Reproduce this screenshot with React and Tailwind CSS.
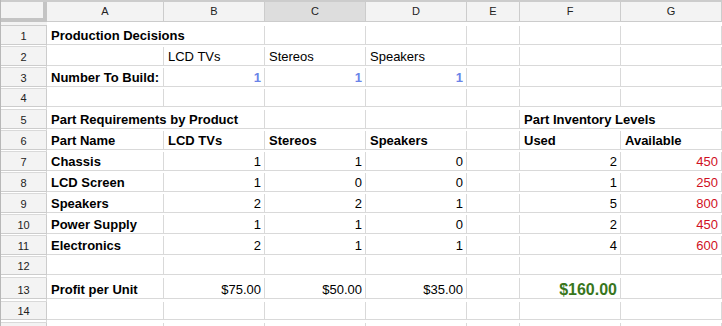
import React from "react";

const COLS = "grid grid-cols-[46px_117px_101px_101px_101px_53px_101px_101px]";

function Cell({ children, span = 1, align = "left", bold = false, color = "text-black", extra = "" }) {
  const spanCls = span === 2 ? "col-span-2" : "";
  const alignCls = align === "right" ? "justify-end pr-[3px]" : "justify-start pl-[4px]";
  return (
    <div
      className={`${spanCls} flex items-end ${alignCls} border-r border-b border-[#d9d9d9] overflow-visible whitespace-nowrap text-[13px] leading-[17px] ${bold ? "font-bold" : "font-normal"} ${color} ${extra}`}
    >
      {children}
    </div>
  );
}

function RowHead({ n }) {
  return (
    <div className="flex items-end justify-center bg-[#f3f3f3] border-r border-b border-[#cccccc] text-[11px] leading-[15px] text-[#222222]">
      {n}
    </div>
  );
}

function Row({ n, h = "h-[21px]", children }) {
  return (
    <div className={`${COLS} ${h}`}>
      <RowHead n={n} />
      {children}
    </div>
  );
}

function EmptyCells() {
  return (
    <>
      <Cell />
      <Cell />
      <Cell />
      <Cell />
      <Cell />
      <Cell />
      <Cell />
      <Cell />
    </>
  );
}

const parts = [
  ["Chassis", "1", "1", "0", "2", "450"],
  ["LCD Screen", "1", "0", "0", "1", "250"],
  ["Speakers", "2", "2", "1", "5", "800"],
  ["Power Supply", "1", "1", "0", "2", "450"],
  ["Electronics", "2", "1", "1", "4", "600"],
];

export default function App() {
  const blue = "text-[#6b84e8]";
  const red = "text-[#d0101e]";
  return (
    <div
      className="w-[722px] h-[326px] overflow-hidden bg-white border-l border-[#b8b8b8]"
      style={{ fontFamily: '"Liberation Sans", Arial, sans-serif' }}
    >
      {/* Column headers */}
      <div className={`${COLS} h-[26px] border-t-2 border-[#cccccc]`}>
        <div className="bg-[#f3f3f3] border-r-4 border-b-4 border-[#c4c4c4]" />
        {["A", "B", "C", "D", "E", "F", "G"].map((l) => (
          <div
            key={l}
            className={`flex items-center justify-center border-r border-b border-[#cccccc] text-[11px] text-[#222222] ${l === "C" ? "bg-[#dddddd]" : "bg-[#f3f3f3]"}`}
          >
            {l}
          </div>
        ))}
        <div className="bg-[#f3f3f3] border-b border-[#cccccc]" />
      </div>

      <Row n={1}>
        <Cell span={2} bold>Production Decisions</Cell>
        <Cell />
        <Cell />
        <Cell />
        <Cell />
        <Cell />
        <Cell />
      </Row>
      <Row n={2}>
        <Cell />
        <Cell>LCD TVs</Cell>
        <Cell>Stereos</Cell>
        <Cell>Speakers</Cell>
        <Cell />
        <Cell />
        <Cell />
        <Cell />
      </Row>
      <Row n={3}>
        <Cell bold>Number To Build:</Cell>
        <Cell align="right" bold color={blue}>1</Cell>
        <Cell align="right" bold color={blue}>1</Cell>
        <Cell align="right" bold color={blue}>1</Cell>
        <Cell />
        <Cell />
        <Cell />
        <Cell />
      </Row>
      <Row n={4}>
        <EmptyCells />
      </Row>
      <Row n={5}>
        <Cell span={2} bold>Part Requirements by Product</Cell>
        <Cell />
        <Cell />
        <Cell />
        <Cell span={2} bold>Part Inventory Levels</Cell>
        <Cell />
      </Row>
      <Row n={6}>
        <Cell bold>Part Name</Cell>
        <Cell bold>LCD TVs</Cell>
        <Cell bold>Stereos</Cell>
        <Cell bold>Speakers</Cell>
        <Cell />
        <Cell bold>Used</Cell>
        <Cell bold>Available</Cell>
        <Cell />
      </Row>
      {parts.map((p, i) => (
        <Row key={p[0]} n={7 + i}>
          <Cell bold>{p[0]}</Cell>
          <Cell align="right">{p[1]}</Cell>
          <Cell align="right">{p[2]}</Cell>
          <Cell align="right">{p[3]}</Cell>
          <Cell />
          <Cell align="right">{p[4]}</Cell>
          <Cell align="right" color={red}>{p[5]}</Cell>
          <Cell />
        </Row>
      ))}
      <Row n={12}>
        <EmptyCells />
      </Row>
      <Row n={13} h="h-[24px]">
        <Cell bold>Profit per Unit</Cell>
        <Cell align="right">$75.00</Cell>
        <Cell align="right">$50.00</Cell>
        <Cell align="right">$35.00</Cell>
        <Cell />
        <Cell align="right" bold color="text-[#38761d]" extra="!text-[16px]">$160.00</Cell>
        <Cell />
        <Cell />
      </Row>
      <Row n={14}>
        <EmptyCells />
      </Row>
      <Row n="">
        <EmptyCells />
      </Row>
    </div>
  );
}
